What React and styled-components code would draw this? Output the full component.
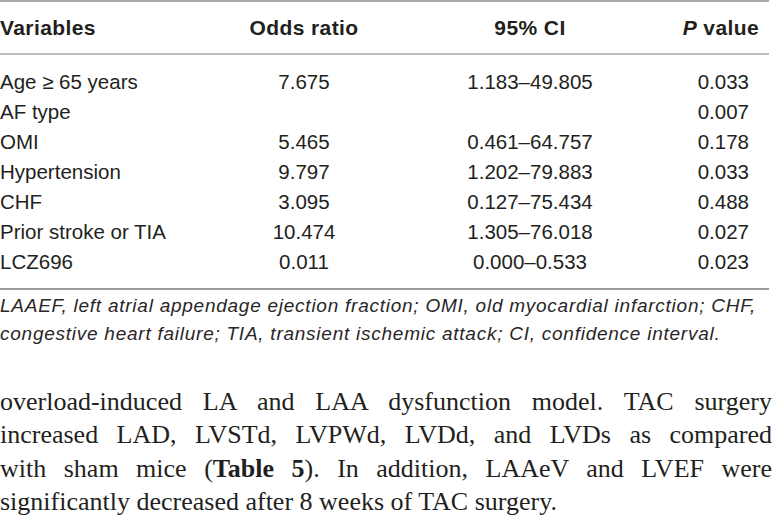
import React from "react";
import styled, { createGlobalStyle } from "styled-components";

const GlobalStyle = createGlobalStyle`
  html, body {
    margin: 0;
    padding: 0;
    background: #ffffff;
  }
  body {
    width: 772px;
    height: 529px;
    overflow: hidden;
  }
`;

const rows = [
  { name: "Age \u2265 65 years", odds: "7.675", ci: "1.183\u201349.805", p: "0.033" },
  { name: "AF type", odds: "", ci: "", p: "0.007" },
  { name: "OMI", odds: "5.465", ci: "0.461\u201364.757", p: "0.178" },
  { name: "Hypertension", odds: "9.797", ci: "1.202\u201379.883", p: "0.033" },
  { name: "CHF", odds: "3.095", ci: "0.127\u201375.434", p: "0.488" },
  { name: "Prior stroke or TIA", odds: "10.474", ci: "1.305\u201376.018", p: "0.027" },
  { name: "LCZ696", odds: "0.011", ci: "0.000\u20130.533", p: "0.023" },
];

const Page = styled.div`
  width: 772px;
  color: #231f20;
`;

const TableBlock = styled.div`
  width: 769px;
  border-top: 2px solid #a9a9a9;
`;

const Table = styled.table`
  width: 100%;
  border-collapse: collapse;
  table-layout: fixed;
  font-family: "Liberation Sans", Arial, sans-serif;
  font-size: 20.5px;
  color: #231f20;
`;

const HeadRow = styled.tr`
  border-bottom: 2px solid #bdbdbd;
`;

const Th = styled.th`
  height: 51px;
  padding: 0 ${({ $pr }) => $pr || 0}px 0 ${({ $pl }) => $pl || 0}px;
  font-weight: bold;
  font-size: 21px;
  letter-spacing: 0.4px;
  text-align: ${({ $align }) => $align || "center"};
  vertical-align: middle;
  width: ${({ $w }) => $w}px;
`;

const Td = styled.td`
  height: 30px;
  padding: 0 ${({ $pr }) => $pr || 0}px 0 ${({ $pl }) => $pl || 0}px;
  text-align: ${({ $align }) => $align || "center"};
  vertical-align: middle;
  white-space: nowrap;
`;

const FirstBodyRow = styled.tr`
  td {
    padding-top: 12px;
  }
`;

const LastBodyRow = styled.tr`
  border-bottom: 2px solid #9a9a9a;
  td {
    padding-bottom: 11px;
  }
`;

const Footnote = styled.p`
  margin: 0;
  padding: 2px 0 0 0;
  font-family: "Liberation Sans", Arial, sans-serif;
  font-style: italic;
  font-size: 19px;
  letter-spacing: 0.75px;
  line-height: 28px;
  color: #2a2627;
  white-space: nowrap;
`;

const Body = styled.p`
  margin: 0;
  padding-top: 37px;
  font-family: "Liberation Serif", "Times New Roman", serif;
  font-size: 26px;
  line-height: 33.3px;
  color: #231f20;
`;

const Line = styled.span`
  display: block;
  white-space: nowrap;
  text-align: ${({ $last }) => ($last ? "left" : "justify")};
  text-align-last: ${({ $last }) => ($last ? "left" : "justify")};
`;

const cells = (r) => (
  <>
    <Td $align="left">{r.name}</Td>
    <Td>{r.odds}</Td>
    <Td>{r.ci}</Td>
    <Td $align="right" $pr={20}>{r.p}</Td>
  </>
);

export default function App() {
  return (
    <Page>
      <GlobalStyle />
      <TableBlock>
        <Table>
          <thead>
            <HeadRow>
              <Th $align="left" $w={214}>Variables</Th>
              <Th $w={180}>Odds ratio</Th>
              <Th $w={272}>95% CI</Th>
              <Th $align="right" $pr={10}>
                <i>P</i> value
              </Th>
            </HeadRow>
          </thead>
          <tbody>
            {rows.map((r, i) => {
              if (i === 0) return <FirstBodyRow key={i}>{cells(r)}</FirstBodyRow>;
              if (i === rows.length - 1) return <LastBodyRow key={i}>{cells(r)}</LastBodyRow>;
              return <tr key={i}>{cells(r)}</tr>;
            })}
          </tbody>
        </Table>
        <Footnote>
          LAAEF, left atrial appendage ejection fraction; OMI, old myocardial infarction; CHF,
          <br />
          congestive heart failure; TIA, transient ischemic attack; CI, confidence interval.
        </Footnote>
      </TableBlock>
      <Body>
        <Line>overload-induced LA and LAA dysfunction model. TAC surgery</Line>
        <Line>increased LAD, LVSTd, LVPWd, LVDd, and LVDs as compared</Line>
        <Line>
          with sham mice (<b>Table 5</b>). In addition, LAAeV and LVEF were
        </Line>
        <Line $last>significantly decreased after 8 weeks of TAC surgery.</Line>
      </Body>
    </Page>
  );
}
